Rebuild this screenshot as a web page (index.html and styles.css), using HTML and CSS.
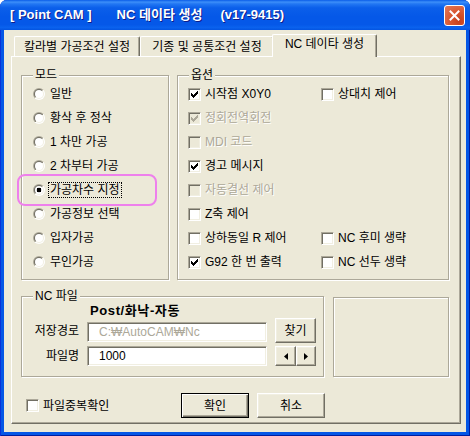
FILE: index.html
```html
<!DOCTYPE html>
<html lang="ko">
<head>
<meta charset="utf-8">
<title>NC 데이타 생성</title>
<link rel="stylesheet" href="styles.css">
</head>
<body>
<div class="window">
  <div class="titlebar">
    <span class="title"><span>[ Point CAM ]</span><span class="tt2">NC 데이타 생성</span><span class="tt3">(v17-9415)</span></span>
    <span class="close"><svg width="11" height="11" viewBox="0 0 11 11"><path d="M1.5 1.5 L9.5 9.5 M9.5 1.5 L1.5 9.5" stroke="#fff" stroke-width="2" stroke-linecap="square"/></svg></span>
  </div>
  <div class="client">
    <div class="tabs">
      <div class="tab t1">칼라별 가공조건 설정</div>
      <div class="tab t2">기종 및 공통조건 설정</div>
      <div class="tab t3 active">NC 데이타 생성</div>
    </div>
    <div class="panel">
      <div class="row-top">
        <fieldset class="group mode">
          <legend>모드</legend>
          <ul class="radios">
            <li class="opt"><span class="radio"></span><span class="lbl">일반</span></li>
            <li class="opt"><span class="radio"></span><span class="lbl">황삭 후 정삭</span></li>
            <li class="opt"><span class="radio"></span><span class="lbl">1 차만 가공</span></li>
            <li class="opt"><span class="radio"></span><span class="lbl">2 차부터 가공</span></li>
            <li class="opt"><span class="radio on"></span><span class="lbl focus">가공차수 지정</span></li>
            <li class="opt"><span class="radio"></span><span class="lbl">가공정보 선택</span></li>
            <li class="opt"><span class="radio"></span><span class="lbl">입자가공</span></li>
            <li class="opt"><span class="radio"></span><span class="lbl">무인가공</span></li>
          </ul>
          <div class="highlight"></div>
        </fieldset>
        <fieldset class="group options">
          <legend>옵션</legend>
          <div class="checks">
            <div class="chk"><span class="cb"><svg width="11" height="11" viewBox="1 1 11 11"><path class="mark" d="M3 5h1v1h1v1h1v-1h1v-1h1v-1h1v-1h1v3h-1v1h-1v1h-1v1h-1v1h-1v-1h-1v-1h-1z"/></svg></span><span class="lbl">시작점 X0Y0</span></div>
            <div class="chk"><span class="cb"></span><span class="lbl">상대치 제어</span></div>
            <div class="chk disabled"><span class="cb"><svg width="11" height="11" viewBox="1 1 11 11"><path class="mark" d="M3 5h1v1h1v1h1v-1h1v-1h1v-1h1v-1h1v3h-1v1h-1v1h-1v1h-1v1h-1v-1h-1v-1h-1z"/></svg></span><span class="lbl">정회전역회전</span></div>
            <div></div>
            <div class="chk disabled"><span class="cb"></span><span class="lbl">MDI 코드</span></div>
            <div></div>
            <div class="chk"><span class="cb"><svg width="11" height="11" viewBox="1 1 11 11"><path class="mark" d="M3 5h1v1h1v1h1v-1h1v-1h1v-1h1v-1h1v3h-1v1h-1v1h-1v1h-1v1h-1v-1h-1v-1h-1z"/></svg></span><span class="lbl">경고 메시지</span></div>
            <div></div>
            <div class="chk disabled"><span class="cb"></span><span class="lbl">자동결선 제어</span></div>
            <div></div>
            <div class="chk"><span class="cb"></span><span class="lbl">Z축 제어</span></div>
            <div></div>
            <div class="chk"><span class="cb"></span><span class="lbl">상하동일 R 제어</span></div>
            <div class="chk"><span class="cb"></span><span class="lbl">NC 후미 생략</span></div>
            <div class="chk"><span class="cb"><svg width="11" height="11" viewBox="1 1 11 11"><path class="mark" d="M3 5h1v1h1v1h1v-1h1v-1h1v-1h1v-1h1v3h-1v1h-1v1h-1v1h-1v1h-1v-1h-1v-1h-1z"/></svg></span><span class="lbl">G92 한 번 출력</span></div>
            <div class="chk"><span class="cb"></span><span class="lbl">NC 선두 생략</span></div>
          </div>
        </fieldset>
      </div>
      <div class="row-mid">
        <fieldset class="group ncfile">
          <legend>NC 파일</legend>
          <div class="post">Post/화낙-자동</div>
          <div class="frow r2">
            <span class="flabel">저장경로</span>
            <span class="tb ro">C:₩AutoCAM₩Nc</span>
            <span class="btn find">찾기</span>
          </div>
          <div class="frow r3">
            <span class="flabel">파일명</span>
            <span class="tb">1000</span>
            <span class="arrows">
              <span class="btn arrow al"><svg width="4" height="7" viewBox="0 0 4 7"><path d="M4 0V7L0 3.5z"/></svg></span>
              <span class="btn arrow ar"><svg width="4" height="7" viewBox="0 0 4 7"><path d="M0 0V7L4 3.5z"/></svg></span>
            </span>
          </div>
        </fieldset>
        <div class="preview"></div>
      </div>
      <div class="row-bot">
        <div class="chk dup"><span class="cb"></span><span class="lbl">파일중복확인</span></div>
        <div class="buttons">
          <span class="btn default">확인</span>
          <span class="btn">취소</span>
        </div>
      </div>
    </div>
  </div>
</div>
</body>
</html>
```

FILE: styles.css
```css
html, body {
  margin: 0;
  padding: 0;
}

body {
  background: #ffffff;
  font-family: "Liberation Sans", "Noto Sans CJK KR", sans-serif;
  font-size: 12px;
  color: #000;
}

.window {
  width: 470px;
  height: 436px;
  display: flex;
  flex-direction: column;
  background: #0456e6;
  border-radius: 7px 7px 0 0;
  box-shadow: inset 1px 0 #0831d9, inset -1px 0 #001ea0, inset 0 -1px #001ea0;
  overflow: hidden;
}

.titlebar {
  height: 30px;
  flex: none;
  display: flex;
  align-items: center;
  justify-content: space-between;
  padding: 0 5px 0 10px;
  box-sizing: border-box;
  background: linear-gradient(to bottom, #0a5de8 0%, #3d8ff9 7%, #2277f3 13%, #0b5fea 26%, #0558e8 55%, #0558e8 82%, #0a62ee 92%, #0454e0 100%);
}

.title {
  display: flex;
  color: #fff;
  font-weight: bold;
  font-size: 13px;
  white-space: nowrap;
  text-shadow: 1px 1px #0f1c89;
  line-height: 16px;
}

.tt2 {
  margin-left: 25px;
}

.tt3 {
  margin-left: 18px;
}

.close {
  align-self: flex-start;
  margin-top: 5px;
  width: 21px;
  height: 21px;
  box-sizing: border-box;
  border: 1px solid #fff;
  border-radius: 3px;
  background: radial-gradient(circle at 75% 80%, #c5401c 0%, #d95730 45%, #e37a5c 100%);
  display: flex;
  align-items: center;
  justify-content: center;
}

.close svg {
  display: block;
}

.client {
  flex: 1;
  margin: 0 4px 4px;
  background: #ece9d8;
  padding: 4px 0 8px 7px;
  display: flex;
  flex-direction: column;
  min-height: 0;
}

.tabs {
  display: flex;
  align-items: flex-end;
  height: 22px;
  padding-left: 3px;
  flex: none;
}

.tab {
  height: 20px;
  box-sizing: border-box;
  border: 1px solid;
  border-color: #fff #716f64 transparent #fff;
  border-bottom: none;
  border-radius: 2px 2px 0 0;
  box-shadow: inset -1px 0 #aca899;
  display: flex;
  align-items: center;
  justify-content: center;
  line-height: 14px;
  white-space: nowrap;
  background: #ece9d8;
}

.t1 {
  width: 126px;
}

.t2 {
  width: 134px;
}

.t3 {
  width: 105px;
  height: 23px;
  margin-left: -2px;
  margin-bottom: -1px;
  padding-bottom: 4px;
  position: relative;
  z-index: 1;
}

.panel {
  width: 450px;
  flex: 1;
  box-sizing: border-box;
  border: 1px solid;
  border-color: #fff #716f64 #716f64 #fff;
  box-shadow: inset -1px -1px #aca899;
  padding: 12px 11px 0 9px;
  display: flex;
  flex-direction: column;
}

.row-top {
  display: flex;
  gap: 8px;
}

.group {
  margin: 0;
  padding: 0;
  min-width: 0;
  box-sizing: border-box;
  border: 1px solid #aca899;
  box-shadow: inset 1px 1px #fff, 1px 1px #fff;
}

.group legend {
  margin-left: 11px;
  padding: 0 2px;
  line-height: 13px;
  background: #ece9d8;
}

.mode {
  width: 148px;
  height: 211px;
  position: relative;
}

.options {
  width: 272px;
  height: 211px;
}

.radios {
  list-style: none;
  margin: 0;
  padding: 0 0 0 11px;
}

.opt {
  height: 24px;
  display: flex;
  align-items: center;
}

.radio {
  flex: none;
  position: relative;
  width: 12px;
  height: 12px;
  border-radius: 50%;
  background: linear-gradient(135deg, #aca899 50%, #ffffff 50%);
  margin-right: 3px;
}

.radio::before {
  content: "";
  position: absolute;
  left: 1px;
  top: 1px;
  width: 10px;
  height: 10px;
  border-radius: 50%;
  background: linear-gradient(135deg, #716f64 50%, #f1efe2 50%);
}

.radio::after {
  content: "";
  position: absolute;
  left: 2px;
  top: 2px;
  width: 8px;
  height: 8px;
  border-radius: 50%;
  background: #fff;
}

.radio.on::after {
  background: radial-gradient(circle, #000 0 2.2px, #fff 2.6px);
}

.lbl {
  border: 1px dotted transparent;
  padding: 0 1px;
  line-height: 14px;
  white-space: nowrap;
}

.lbl.focus {
  border-color: #000;
}

.highlight {
  position: absolute;
  left: -5px;
  top: 92px;
  width: 140px;
  height: 32px;
  box-sizing: border-box;
  border: 2px solid #ee80ec;
  border-radius: 8px;
}

.checks {
  display: grid;
  grid-template-columns: 133px auto;
  grid-auto-rows: 24px;
  padding-left: 10px;
}

.chk {
  display: flex;
  align-items: center;
}

.cb {
  flex: none;
  width: 13px;
  height: 13px;
  box-sizing: border-box;
  border: 1px solid;
  border-color: #aca899 #fff #fff #aca899;
  box-shadow: inset 1px 1px #716f64, inset -1px -1px #f1efe2;
  background: #fff;
  margin-right: 2px;
}

.cb svg {
  display: block;
  shape-rendering: crispEdges;
}

.mark {
  fill: #000;
}

.chk.disabled .cb {
  background: #ece9d8;
}

.chk.disabled .mark {
  fill: #aca899;
}

.chk.disabled .lbl {
  color: #aca899;
  text-shadow: 1px 1px #fff;
}

.row-mid {
  display: flex;
  gap: 9px;
  margin-top: 10px;
}

.ncfile {
  width: 303px;
  height: 87px;
}

.preview {
  width: 116px;
  height: 80px;
  margin-top: 7px;
  box-sizing: border-box;
  border: 1px solid #aca899;
  box-shadow: inset 1px 1px #fff, 1px 1px #fff;
}

.post {
  height: 15px;
  line-height: 15px;
  font-weight: bold;
  font-size: 13px;
  letter-spacing: 0.6px;
  padding-left: 68px;
}

.frow {
  display: flex;
  align-items: flex-start;
}

.frow.r2 {
  height: 25px;
}

.frow.r3 {
  height: 20px;
  margin-top: 3px;
}

.flabel {
  width: 57px;
  text-align: right;
  margin-right: 8px;
  line-height: 14px;
  white-space: nowrap;
}

.r2 .flabel {
  margin-top: 6px;
}

.r3 .flabel {
  margin-top: 3px;
}

.tb {
  width: 180px;
  height: 20px;
  box-sizing: border-box;
  border: 1px solid;
  border-color: #aca899 #fff #fff #aca899;
  box-shadow: inset 1px 1px #716f64, inset -1px -1px #f1efe2;
  background: #fff;
  padding-left: 11px;
  line-height: 18px;
  white-space: nowrap;
}

.r2 .tb {
  margin-top: 4px;
}

.tb.ro {
  color: #aca899;
}

.btn {
  display: flex;
  align-items: center;
  justify-content: center;
  box-sizing: border-box;
  border: 1px solid;
  border-color: #fff #716f64 #716f64 #fff;
  box-shadow: inset -1px -1px #aca899, inset 1px 1px #f1efe2;
  background: #ece9d8;
  line-height: 14px;
  white-space: nowrap;
}

.find {
  width: 41px;
  height: 25px;
  margin-left: 8px;
}

.arrows {
  display: flex;
  margin-left: 8px;
}

.arrow {
  height: 20px;
}

.al {
  width: 21px;
}

.ar {
  width: 20px;
}

.arrow svg {
  display: block;
}

.row-bot {
  display: flex;
  align-items: center;
  height: 25px;
  margin-top: 16px;
}

.chk.dup {
  width: 155px;
  margin-left: 5px;
}

.buttons {
  display: flex;
  gap: 8px;
}

.buttons .btn {
  width: 68px;
  height: 25px;
}

.btn.default {
  border-color: #000;
  box-shadow: inset 1px 1px #fff, inset -1px -1px #716f64, inset -2px -2px #aca899;
}
```
